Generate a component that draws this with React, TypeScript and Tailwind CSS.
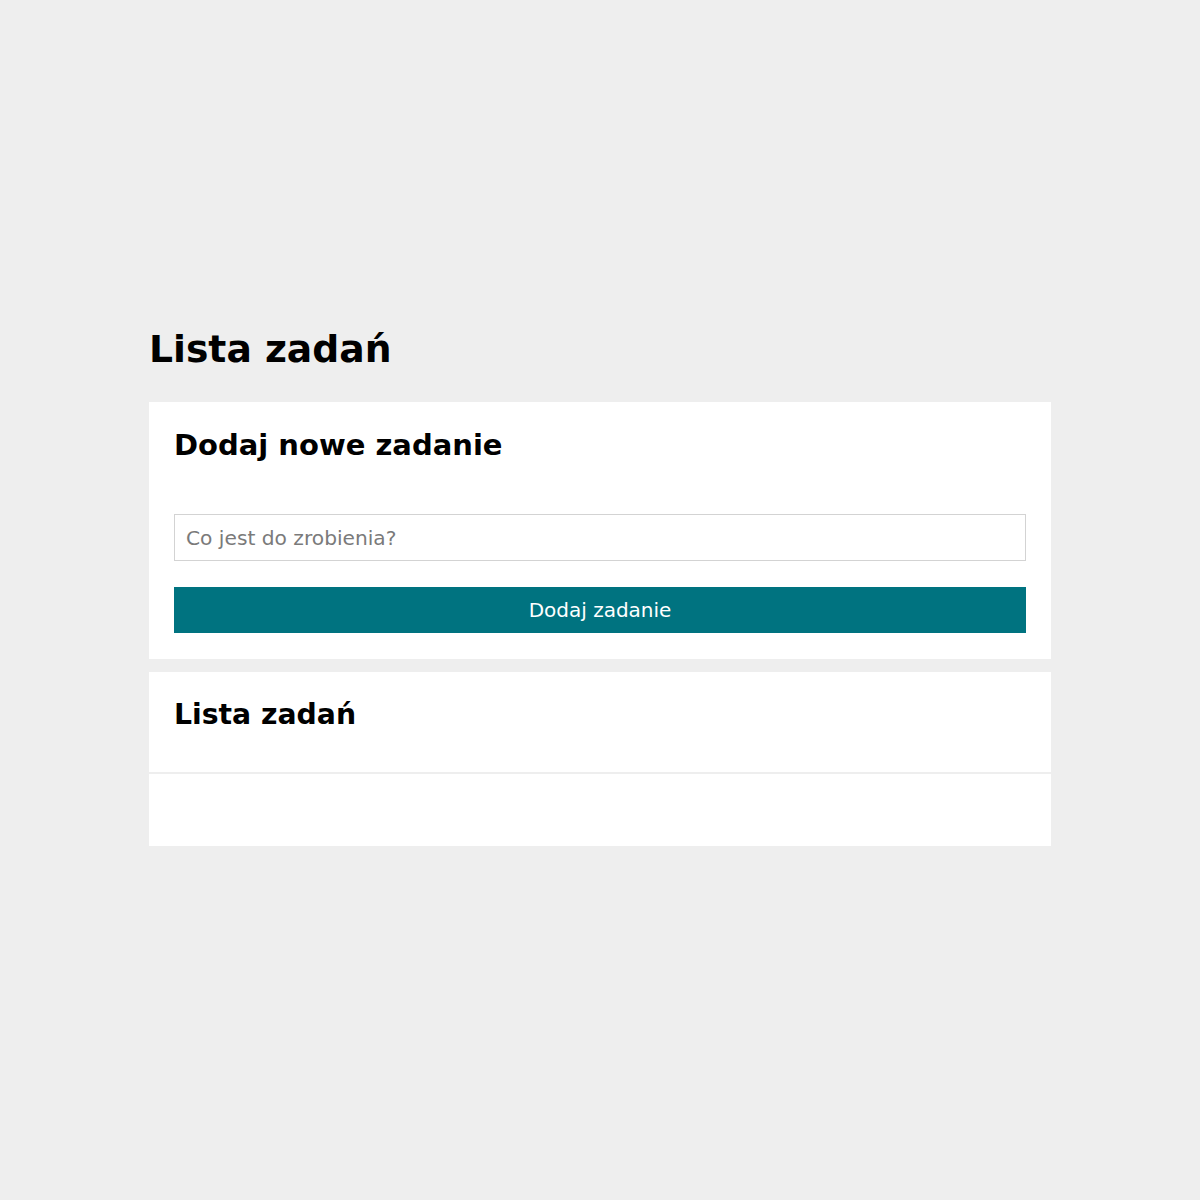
import { useState } from 'react';

export default function App() {
  const [task, setTask] = useState('');

  return (
    <div className="min-h-[1200px] bg-[#eeeeee] font-['DejaVu_Sans',sans-serif] text-black">
      <div className="mx-auto w-[902px] pt-[325px]">
        <h1 className="mb-[29px] text-[37.7px] font-bold leading-[48px]">Lista zadań</h1>

        <section className="bg-white px-[25px] pt-[25px] pb-[26px]">
          <h2 className="text-[29px] font-bold leading-[36px]">Dodaj nowe zadanie</h2>
          <form className="mt-[51px]" onSubmit={(e) => e.preventDefault()}>
            <input
              value={task}
              onChange={(e) => setTask(e.target.value)}
              placeholder="Co jest do zrobienia?"
              className="block h-[47px] w-full border border-[#d3d3d3] px-[11px] text-[20.2px] outline-none placeholder:text-[#7a7a7a]"
            />
            <button
              type="submit"
              className="mt-[26px] block h-[46px] w-full bg-[#007380] text-[20px] text-white"
            >
              Dodaj zadanie
            </button>
          </form>
        </section>

        <section className="mt-[13px] bg-white">
          <div className="h-[102px] border-b-2 border-[#eeeeee] px-[25px] pt-[25px]">
            <h2 className="text-[28.3px] font-bold leading-[36px]">Lista zadań</h2>
          </div>
          <ul className="h-[72px]"></ul>
        </section>
      </div>
    </div>
  );
}
